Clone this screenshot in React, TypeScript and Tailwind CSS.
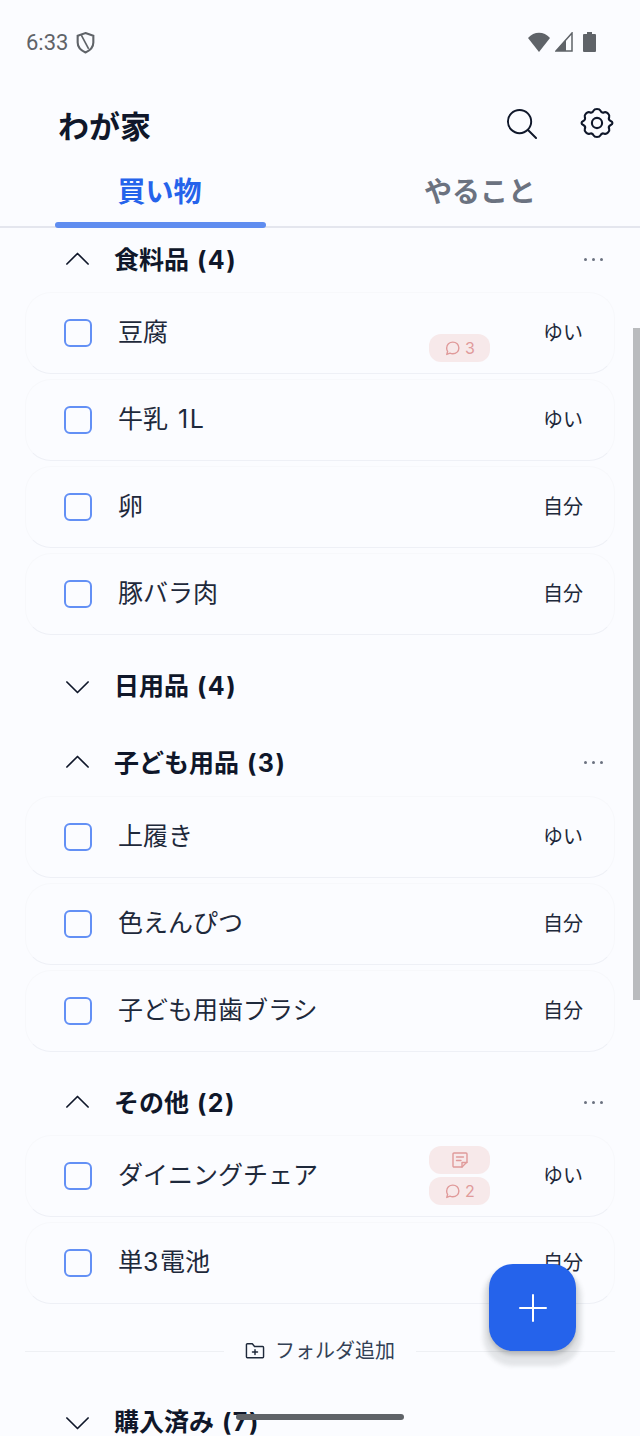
const font = { fontFamily: 'Inter, "Noto Sans CJK JP", sans-serif' };

type Item = { name: string; who: string; comments?: number; note?: boolean };

const food: Item[] = [
  { name: "豆腐", who: "ゆい", comments: 3 },
  { name: "牛乳 1L", who: "ゆい" },
  { name: "卵", who: "自分" },
  { name: "豚バラ肉", who: "自分" },
];
const kids: Item[] = [
  { name: "上履き", who: "ゆい" },
  { name: "色えんぴつ", who: "自分" },
  { name: "子ども用歯ブラシ", who: "自分" },
];
const other: Item[] = [
  { name: "ダイニングチェア", who: "ゆい", comments: 2, note: true },
  { name: "単3電池", who: "自分" },
];

// latin runs sit a little wider than the kana next to them
function Spaced({ text }: { text: string }) {
  return (
    <>
      {text.split(/([0-9A-Za-z()]+)/).map((part, i) =>
        i % 2 === 1 ? (
          <span key={i} className="tracking-[1.5px]">{part}</span>
        ) : (
          part
        ),
      )}
    </>
  );
}

function Chevron({ open }: { open: boolean }) {
  return (
    <svg width="24" height="24" viewBox="0 0 24 24" fill="none" stroke="#0f172a" strokeWidth="1.7" strokeLinecap="round" strokeLinejoin="round">
      <path d={open ? "M0.9 16 L11.5 5.5 L22.1 16" : "M0.9 8 L11.5 18.5 L22.1 8"} />
    </svg>
  );
}

function SectionHeader({ title, open, more = true }: { title: string; open: boolean; more?: boolean }) {
  return (
    <div className="flex items-center h-[32px] pl-[66px] pr-[37px]">
      <Chevron open={open} />
      <span className="ml-[24px] text-[25px] leading-[32px] font-bold [word-spacing:2px] text-[#0f172a]">
        <Spaced text={title} />
      </span>
      {more && (
        <span className="ml-auto -mt-[2px] flex gap-[5px]">
          <i className="w-[3px] h-[3px] rounded-full bg-[#6b7280]" />
          <i className="w-[3px] h-[3px] rounded-full bg-[#6b7280]" />
          <i className="w-[3px] h-[3px] rounded-full bg-[#6b7280]" />
        </span>
      )}
    </div>
  );
}

function Pill({ children }: { children: React.ReactNode }) {
  return (
    <span className="flex items-center justify-center gap-[4px] w-[61px] h-[28px] rounded-[12px] bg-[#f7e9ea] text-[#e09a9a] text-[16px] leading-none">
      {children}
    </span>
  );
}

function Bubble() {
  return (
    <svg width="17" height="17" viewBox="0 0 16 16" fill="none" stroke="#e09a9a" strokeWidth="1.3" strokeLinejoin="round">
      <path d="M8.3 2 C11.6 2 14 4.4 14 7.5 C14 10.6 11.5 13 8.3 13 C7.3 13 6.4 12.8 5.6 12.4 L2.6 13.6 L3.4 10.8 C2.8 9.9 2.5 8.8 2.5 7.5 C2.5 4.4 5 2 8.3 2 Z" />
    </svg>
  );
}

function Note() {
  return (
    <svg width="18" height="18" viewBox="0 0 18 18" fill="none" stroke="#e09a9a" strokeWidth="1.4" strokeLinejoin="round" strokeLinecap="round">
      <path d="M2 3 a1 1 0 0 1 1 -1 H15 a1 1 0 0 1 1 1 V11 L11 16 H3 a1 1 0 0 1 -1 -1 Z" />
      <path d="M5.5 6 H12.5 M5.5 9.5 H10 M11 16 V11.5 H16" />
    </svg>
  );
}

function Row({ item }: { item: Item }) {
  return (
    <div className="relative flex items-center h-[82px] pl-[38px] pr-[31px] rounded-[26px] border border-[#f7f8fb] border-b-[#eef0f6] bg-[#fbfcff]">
      <span className="w-[28px] h-[28px] rounded-[6px] border-2 border-[#6390f5]" />
      <span className="ml-[26px] text-[25px] leading-[32px] [word-spacing:3px] text-[#1e293b] -mt-[2px]">
        <Spaced text={item.name} />
      </span>
      <span className="ml-auto text-[20px] leading-[26px] text-[#1e293b] -mt-[1px]">{item.who}</span>
      {(item.comments || item.note) && (
        <div className={`absolute left-[403px] flex flex-col gap-[3px] ${item.note ? "top-[10px]" : "top-[41px]"}`}>
          {item.note && (
            <Pill>
              <Note />
            </Pill>
          )}
          {item.comments && (
            <Pill>
              <Bubble />
              {item.comments}
            </Pill>
          )}
        </div>
      )}
    </div>
  );
}

function Group({ items }: { items: Item[] }) {
  return (
    <div className="flex flex-col gap-[5px] mx-[25px]">
      {items.map((item) => (
        <Row key={item.name} item={item} />
      ))}
    </div>
  );
}

export default function App() {
  return (
    <div className="relative h-[1436px] w-[640px] overflow-hidden bg-[#fbfcff] flex flex-col" style={font}>
      {/* status bar */}
      <div className="flex items-center h-[84px] pl-[26px] pr-[44px] shrink-0">
        <span className="text-[22px] text-[#5f6368]" style={{ fontFamily: "Roboto, sans-serif" }}>6:33</span>
        <svg className="ml-[8px]" width="19" height="23" viewBox="0 0 18 22" fill="none" stroke="#5f6368" strokeWidth="2">
          <path d="M9 2 L16.5 4.5 V11 C16.5 15.5 13.5 18.5 9 20.5 C4.5 18.5 1.5 15.5 1.5 11 V4.5 Z" />
          <path d="M5 4 L12 17" strokeWidth="1.6" />
        </svg>
        <div className="ml-auto flex items-center">
          <svg width="22" height="20" viewBox="0 0 22 20" fill="#5f6368"><path d="M0 6 C6 -1 16 -1 22 6 L11 20 Z" /></svg>
          <svg className="ml-[5px]" width="18" height="20" viewBox="0 0 18 20"><path d="M17 1 V19 H1 Z" fill="none" stroke="#5f6368" strokeWidth="1.5" /><path d="M11 7.6 L1 19 H11 Z" fill="#5f6368" /></svg>
          <svg className="ml-[10px]" width="13" height="20" viewBox="0 0 13 20" fill="#5f6368"><path d="M4 0 H9 V2 H12 a1 1 0 0 1 1 1 V19 a1 1 0 0 1 -1 1 H1 a1 1 0 0 1 -1 -1 V3 a1 1 0 0 1 1 -1 H4 Z" /></svg>
        </div>
      </div>

      {/* title row */}
      <div className="flex items-center h-[78px] shrink-0 pl-[58px] pr-[26px]">
        <h1 className="text-[31px] leading-[40px] font-bold text-[#0f172a] mt-[8px]">わが家</h1>
        <svg className="ml-auto" width="31" height="31" viewBox="0 0 32 32" fill="none" stroke="#0f172a" strokeWidth="2" strokeLinecap="round">
          <circle cx="14" cy="14" r="12" />
          <path d="M23 23 L31 31" />
        </svg>
        <svg className="ml-[43px]" width="34" height="34" viewBox="0 0 24 24" fill="none" stroke="#0f172a" strokeWidth="1.5" strokeLinecap="round" strokeLinejoin="round">
          <path d="M9.6 3.3 C10.3 1.7 13.7 1.7 14.4 3.3 C14.9 4.4 16.1 4.9 17.2 4.4 C18.9 3.8 21.2 6.1 20.6 7.8 C20.1 8.9 20.6 10.1 21.7 10.6 C23.3 11.3 23.3 12.7 21.7 13.4 C20.6 13.9 20.1 15.1 20.6 16.2 C21.2 17.9 18.9 20.2 17.2 19.6 C16.1 19.1 14.9 19.6 14.4 20.7 C13.7 22.3 10.3 22.3 9.6 20.7 C9.1 19.6 7.9 19.1 6.8 19.6 C5.1 20.2 2.8 17.9 3.4 16.2 C3.9 15.1 3.4 13.9 2.3 13.4 C0.7 12.7 0.7 11.3 2.3 10.6 C3.4 10.1 3.9 8.9 3.4 7.8 C2.8 6.1 5.1 3.8 6.8 4.4 C7.9 4.9 9.1 4.4 9.6 3.3 Z" />
          <circle cx="12" cy="12" r="3.6" />
        </svg>
      </div>

      {/* tabs */}
      <div className="relative flex h-[66px] shrink-0 border-b-2 border-[#e4e6ee]">
        <div className="w-[320px] text-center text-[28px] leading-[60px] font-bold text-[#2563eb] pr-[1px]">買い物</div>
        <div className="w-[320px] text-center text-[28px] leading-[60px] font-bold text-[#6b7280]">やること</div>
        <span className="absolute left-[55px] bottom-[-2px] w-[211px] h-[6px] rounded-full bg-[#5f8df0]" />
      </div>

      {/* list */}
      <div className="flex-1 min-h-0 overflow-hidden pt-[16px]">
        <SectionHeader title="食料品 (4)" open />
        <div className="mt-[16px]"><Group items={food} /></div>
        <div className="mt-[35px]"><SectionHeader title="日用品 (4)" open={false} more={false} /></div>
        <div className="mt-[45px]"><SectionHeader title="子ども用品 (3)" open /></div>
        <div className="mt-[17px]"><Group items={kids} /></div>
        <div className="mt-[35px]"><SectionHeader title="その他 (2)" open /></div>
        <div className="mt-[16px]"><Group items={other} /></div>
        <div className="flex items-center mx-[25px] mt-[31px] h-[32px]">
          <span className="flex-1 h-px bg-[#eef0f4]" />
          <span className="flex items-center gap-[10px] px-[21px] text-[20px] text-[#334155]">
            <svg width="20" height="18" viewBox="0 0 22 20" fill="none" stroke="#1e293b" strokeWidth="1.6" strokeLinejoin="round" strokeLinecap="round">
              <path d="M1.5 3 a1 1 0 0 1 1 -1 H8 L10.5 5 H19.5 a1 1 0 0 1 1 1 V16.5 a1 1 0 0 1 -1 1 H2.5 a1 1 0 0 1 -1 -1 Z" />
              <path d="M11 8.5 V14 M8.2 11.2 H13.8" />
            </svg>
            フォルダ追加
          </span>
          <span className="flex-1 h-px bg-[#eef0f4]" />
        </div>
        <div className="mt-[39px]"><SectionHeader title="購入済み (7)" open={false} more={false} /></div>
      </div>

      {/* scrollbar */}
      <span className="absolute right-0 top-[328px] w-[7px] h-[672px] bg-[#b9bbbe]" />

      {/* add button */}
      <button className="absolute left-[489px] top-[1264px] w-[87px] h-[87px] rounded-[24px] bg-[#2563eb] flex items-center justify-center shadow-[0_9px_4px_6px_rgba(60,64,67,0.12),0_4px_4px_rgba(60,64,67,0.25)]">
        <svg width="28" height="28" viewBox="0 0 28 28" stroke="#fff" strokeWidth="2" strokeLinecap="round">
          <path d="M14 1 V27 M1 14 H27" />
        </svg>
      </button>

      {/* gesture bar */}
      <span className="absolute left-[236px] top-[1414px] w-[168px] h-[6px] rounded-full bg-[#5f6368]" />
    </div>
  );
}
